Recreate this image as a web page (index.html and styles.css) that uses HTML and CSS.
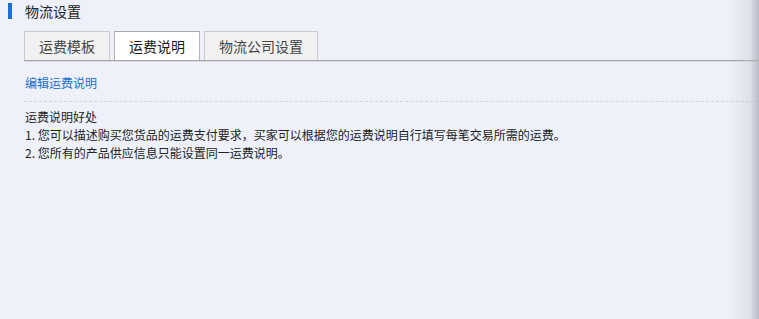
FILE: index.html
```html
<!DOCTYPE html>
<html lang="zh">
<head>
<meta charset="utf-8">
<title>物流设置</title>
<link rel="stylesheet" href="styles.css">
</head>
<body>
<div class="page">
  <div class="header">
    <span class="bar"></span>
    <h1 class="title">物流设置</h1>
  </div>
  <div class="tabs">
    <div class="tab">运费模板</div>
    <div class="tab active">运费说明</div>
    <div class="tab">物流公司设置</div>
  </div>
  <div class="content">
    <a class="edit-link" href="#">编辑运费说明</a>
    <div class="divider"></div>
    <div class="desc">
      <p>运费说明好处</p>
      <p>1. 您可以描述购买您货品的运费支付要求，买家可以根据您的运费说明自行填写每笔交易所需的运费。</p>
      <p>2. 您所有的产品供应信息只能设置同一运费说明。</p>
    </div>
  </div>
</div>
<div class="edge-shade"></div>
</body>
</html>
```

FILE: styles.css
```css
html, body {
  margin: 0;
  padding: 0;
  height: 100%;
}
body {
  background: #eef1f9;
  font-family: "Noto Sans CJK SC", "Liberation Sans", sans-serif;
  color: #222;
  overflow: hidden;
}
.page {
  padding-top: 3px;
}
.header {
  display: flex;
  align-items: center;
  height: 16px;
  padding-left: 8px;
}
.bar {
  width: 4px;
  height: 16px;
  background: #1b6fd2;
}
.title {
  margin: 0 0 0 13px;
  font-size: 14px;
  font-weight: normal;
  line-height: 16px;
  color: #222;
}
.tabs {
  display: flex;
  gap: 4px;
  margin: 12px 0 0 24px;
  border-bottom: 1px solid #a3a3a3;
  box-shadow: 0 1px 0 #dcdee3;
  height: 29px;
}
.tab {
  box-sizing: border-box;
  height: 29px;
  padding: 0 14px;
  border: 1px solid #cacaca;
  border-bottom: none;
  background: #f1f1f1;
  font-size: 14px;
  line-height: 28px;
  color: #444;
}
.tab.active {
  background: #fff;
  border-color: #b5b5b5;
  border-top-color: #a8a8a8;
  color: #1a1a1a;
}
.content {
  padding-left: 25px;
}
.edit-link {
  display: block;
  margin-top: 14px;
  font-size: 12px;
  line-height: 16px;
  color: #1a6fcb;
  text-decoration: none;
}
.divider {
  margin: 10px 0 0 -1px;
  border-top: 1px dashed #d4d6db;
}
.desc {
  margin-top: 6px;
  font-size: 12px;
  line-height: 18px;
  color: #222;
}
.desc p {
  margin: 0;
}
.edge-shade {
  position: fixed;
  top: 0;
  right: 0;
  bottom: 0;
  width: 30px;
  background: linear-gradient(to right, rgba(190, 195, 205, 0), rgba(190, 195, 205, 0.35) 70%, rgba(170, 175, 185, 0.8));
  pointer-events: none;
}
```
